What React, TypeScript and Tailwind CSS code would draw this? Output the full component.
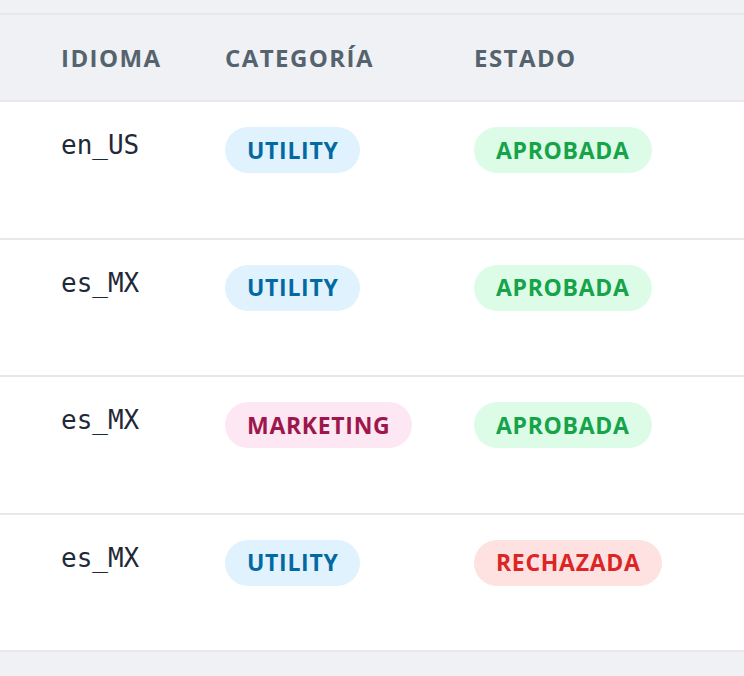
const rows = [
  { lang: "en_US", cat: "UTILITY", status: "APROBADA" },
  { lang: "es_MX", cat: "UTILITY", status: "APROBADA" },
  { lang: "es_MX", cat: "MARKETING", status: "APROBADA" },
  { lang: "es_MX", cat: "UTILITY", status: "RECHAZADA" },
];

const catStyles: Record<string, string> = {
  UTILITY: "bg-[#e0f2fe] text-[#0369a1]",
  MARKETING: "bg-[#fce7f3] text-[#9d174d]",
};

const statusStyles: Record<string, string> = {
  APROBADA: "bg-[#dcfce7] text-[#16a34a]",
  RECHAZADA: "bg-[#fee2e2] text-[#dc2626]",
};

function Badge({ label, className }: { label: string; className: string }) {
  return (
    <span
      className={`inline-flex h-[46px] items-center rounded-full px-[22px] text-[23px] font-bold tracking-[0.03em] ${className}`}
    >
      {label}
    </span>
  );
}

export default function App() {
  return (
    <div
      className="min-h-[676px] w-[744px] bg-[#f0f1f5] pt-[13px]"
      style={{ fontFamily: '"Open Sans", "Liberation Sans", sans-serif' }}
    >
      <div className="border-t-2 border-[#e6e8ec]">
        <div className="flex h-[87px] items-center border-b-2 border-[#e6e8ec] text-[24px] font-bold tracking-[0.06em] text-[#55636e]">
          <div className="w-[225px] pl-[61px]">IDIOMA</div>
          <div className="w-[249px]">CATEGORÍA</div>
          <div>ESTADO</div>
        </div>
        {rows.map((row, i) => (
          <div
            key={i}
            className="flex h-[137.5px] items-start border-b-2 border-[#e6e8ec] bg-white pt-[25px]"
          >
            <div
              className="w-[225px] pl-[61px] text-[26px] leading-[36px] text-[#1f2937]"
              style={{ fontFamily: '"DejaVu Sans Mono", monospace' }}
            >
              {row.lang}
            </div>
            <div className="w-[249px]">
              <Badge label={row.cat} className={catStyles[row.cat]} />
            </div>
            <div>
              <Badge label={row.status} className={statusStyles[row.status]} />
            </div>
          </div>
        ))}
      </div>
    </div>
  );
}
